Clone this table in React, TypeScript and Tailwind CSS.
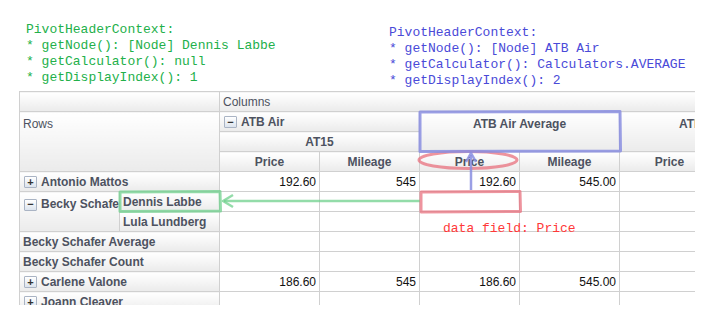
const head = 'bg-gradient-to-b from-white to-[#ebebeb] border border-[#d0d0d0] text-[#4d5260] font-bold';
const data = 'bg-white border border-[#d0d0d0] text-right pr-[3px] text-[#111]';

function Toggle({ open }: { open: boolean }) {
  return (
    <span className="inline-flex items-center justify-center w-[13px] h-[12px] mr-[4px] border border-[#aab4c4] rounded-[1px] bg-gradient-to-b from-white to-[#dce4ee] text-[#333] text-[11px] font-bold leading-none align-middle">
      {open ? '−' : '+'}
    </span>
  );
}

function Overlay() {
  return (
    <svg className="absolute left-0 top-0 pointer-events-none" width="712" height="326">
      {/* green: row header context */}
      <g stroke="#6fd08c" strokeOpacity="0.75" fill="none" strokeWidth="3" strokeLinejoin="round">
        <path d="M120 192 L220 191.5 L220.5 211 L120 211.5 Z" />
        <path d="M420 201 L224 201" strokeWidth="2.5" />
        <path d="M233 195 L223 201 L233 207" strokeWidth="2.5" />
      </g>
      {/* red: data field */}
      <g stroke="#e8707e" strokeOpacity="0.75" fill="none" strokeWidth="3" strokeLinejoin="round">
        <path d="M421 192 L520 191.5 L520.5 211.5 L421 212 Z" />
        <ellipse cx="468" cy="160" rx="49" ry="8.5" />
      </g>
      {/* blue: column header context */}
      <g stroke="#8a8ee0" strokeOpacity="0.85" fill="none" strokeWidth="3" strokeLinejoin="round">
        <path d="M420 112 L620 111.5 L620.5 151 L420 151.5 Z" />
        <path d="M471 190 L471 155" strokeWidth="2.5" />
        <path d="M466 162 L471 153 L476 162" strokeWidth="2.5" />
      </g>
    </svg>
  );
}

export default function App() {
  return (
    <div className="relative w-[712px] h-[326px] bg-white overflow-hidden">
      <div className="flex items-start pt-[22px] pl-[26px] font-['Liberation_Mono',monospace] text-[13px] leading-4 whitespace-pre">
        <div className="w-[363px] text-[#22b04a]">
          <div>PivotHeaderContext:</div>
          <div>* getNode(): [Node] Dennis Labbe</div>
          <div>* getCalculator(): null</div>
          <div>* getDisplayIndex(): 1</div>
        </div>
        <div className="pt-[3px] text-[#4a4ad8]">
          <div>PivotHeaderContext:</div>
          <div>* getNode(): [Node] ATB Air</div>
          <div>* getCalculator(): Calculators.AVERAGE</div>
          <div>* getDisplayIndex(): 2</div>
        </div>
      </div>

      <div className="ml-[19px] mt-[2px] w-[676px] h-[214px] overflow-hidden font-['Liberation_Sans',Arial,sans-serif] text-[12px]">
        <table className="table-fixed border-collapse w-[800px]">
          <colgroup>
            <col className="w-[100px]" />
            <col className="w-[100px]" />
            <col className="w-[100px]" />
            <col className="w-[100px]" />
            <col className="w-[100px]" />
            <col className="w-[100px]" />
            <col className="w-[100px]" />
            <col className="w-[100px]" />
          </colgroup>
          <tbody>
            <tr className="h-5">
              <td colSpan={2} className={head} />
              <td colSpan={6} className="bg-gradient-to-b from-white to-[#ebebeb] border border-[#d0d0d0] text-[#4d5260] pl-[3px]">Columns</td>
            </tr>
            <tr className="h-5">
              <td colSpan={2} rowSpan={3} className="bg-gradient-to-b from-white to-[#ebebeb] border border-[#d0d0d0] text-[#4d5260] align-top pl-[3px] pt-[3px]">Rows</td>
              <td colSpan={2} className={`${head} pl-[4px]`}><Toggle open />ATB Air</td>
              <td colSpan={2} rowSpan={2} className={`${head} text-center align-top pt-[3px]`}>ATB Air Average</td>
              <td colSpan={2} rowSpan={2} className={`${head} text-center align-top pt-[3px]`}>ATB Air Count</td>
            </tr>
            <tr className="h-5">
              <td colSpan={2} className={`${head} text-center`}>AT15</td>
            </tr>
            <tr className="h-5">
              <td className={`${head} text-center`}>Price</td>
              <td className={`${head} text-center`}>Mileage</td>
              <td className={`${head} text-center`}>Price</td>
              <td className={`${head} text-center`}>Mileage</td>
              <td className={`${head} text-center`}>Price</td>
              <td className={`${head} text-center`}>Mileage</td>
            </tr>
            <tr className="h-5">
              <td colSpan={2} className={`${head} pl-[4px]`}><Toggle open={false} />Antonio Mattos</td>
              <td className={data}>192.60</td>
              <td className={data}>545</td>
              <td className={data}>192.60</td>
              <td className={data}>545.00</td>
              <td className={data} />
              <td className={data} />
            </tr>
            <tr className="h-5">
              <td rowSpan={2} className={`${head} pl-[4px] align-top pt-[3px] whitespace-nowrap overflow-hidden`}><Toggle open />Becky Schafer</td>
              <td className={`${head} pl-[3px] whitespace-nowrap`}>Dennis Labbe</td>
              <td className={data} />
              <td className={data} />
              <td className={data} />
              <td className={data} />
              <td className={data} />
              <td className={data} />
            </tr>
            <tr className="h-5">
              <td className={`${head} pl-[3px] whitespace-nowrap`}>Lula Lundberg</td>
              <td className={data} />
              <td className={data} />
              <td className={data} />
              <td className={data} />
              <td className={data} />
              <td className={data} />
            </tr>
            <tr className="h-5">
              <td colSpan={2} className={`${head} pl-[3px]`}>Becky Schafer Average</td>
              <td className={data} />
              <td className={data} />
              <td className={data} />
              <td className={data} />
              <td className={data} />
              <td className={data} />
            </tr>
            <tr className="h-5">
              <td colSpan={2} className={`${head} pl-[3px]`}>Becky Schafer Count</td>
              <td className={data} />
              <td className={data} />
              <td className={data} />
              <td className={data} />
              <td className={data} />
              <td className={data} />
            </tr>
            <tr className="h-5">
              <td colSpan={2} className={`${head} pl-[4px]`}><Toggle open={false} />Carlene Valone</td>
              <td className={data}>186.60</td>
              <td className={data}>545</td>
              <td className={data}>186.60</td>
              <td className={data}>545.00</td>
              <td className={data} />
              <td className={data} />
            </tr>
            <tr className="h-5">
              <td colSpan={2} className={`${head} pl-[4px]`}><Toggle open={false} />Joann Cleaver</td>
              <td className={data} />
              <td className={data} />
              <td className={data} />
              <td className={data} />
              <td className={data} />
              <td className={data} />
            </tr>
          </tbody>
        </table>
      </div>

      <div className="absolute left-[443px] top-[221px] font-['Liberation_Mono',monospace] text-[13px] leading-4 text-[#ff3838] whitespace-pre">
        data field: Price
      </div>

      <Overlay />
    </div>
  );
}
